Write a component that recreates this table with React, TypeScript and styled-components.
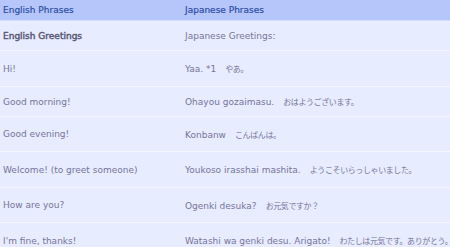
import styled, { createGlobalStyle } from 'styled-components';

const GlobalStyle = createGlobalStyle`
  html, body {
    margin: 0;
    padding: 0;
    background: #e8ecff;
  }
`;

const Table = styled.div`
  width: 450px;
  overflow: hidden;
  font-family: 'DejaVu Sans', 'Noto Sans CJK JP', sans-serif;
  font-size: 9px;
  color: #76749a;
  background: #e8ecff;
`;

const HeadRow = styled.div`
  display: grid;
  grid-template-columns: 182px 1fr;
  align-items: center;
  height: 20px;
  background: #b6c6fa;
  color: #2c4ea6;
  border-bottom: 1px solid #d4ddff;
  -webkit-text-stroke: 0.2px #2c4ea6;
`;

const Row = styled.div<{ $h: number }>`
  display: grid;
  grid-template-columns: 182px 1fr;
  align-items: center;
  height: ${({ $h }) => $h}px;
  box-sizing: border-box;
  border-bottom: 1px solid #f4f6ff;
  color: #76749a;
`;

const Cell = styled.div<{ $strong?: boolean }>`
  padding-left: 3px;
  white-space: nowrap;
  ${({ $strong }) =>
    $strong &&
    `
    color: #5b5878;
    -webkit-text-stroke: 0.45px #5b5878;
  `}
`;

const Jp = styled.span`
  font-family: 'Noto Sans CJK JP', sans-serif;
  font-size: 8px;
  letter-spacing: -0.4px;
`;

type Phrase = {
  en: string;
  romaji: string;
  kana?: string;
  h: number;
  strong?: boolean;
};

const phrases: Phrase[] = [
  { en: 'English Greetings', romaji: 'Japanese Greetings:', h: 30, strong: true },
  { en: 'Hi!', romaji: 'Yaa. *1', kana: 'やあ。', h: 36 },
  { en: 'Good morning!', romaji: 'Ohayou gozaimasu.', kana: 'おはようございます。', h: 30 },
  { en: 'Good evening!', romaji: 'Konbanw', kana: 'こんばんは。', h: 35 },
  { en: 'Welcome! (to greet someone)', romaji: 'Youkoso irasshai mashita.', kana: 'ようこそいらっしゃいました。', h: 36 },
  { en: 'How are you?', romaji: 'Ogenki desuka?', kana: 'お元気ですか？', h: 35 },
  { en: "I'm fine, thanks!", romaji: 'Watashi wa genki desu. Arigato!', kana: 'わたしは元気です。ありがとう。', h: 36 },
];

export default function App() {
  return (
    <>
      <GlobalStyle />
      <Table>
        <HeadRow>
          <Cell>English Phrases</Cell>
          <Cell>Japanese Phrases</Cell>
        </HeadRow>
        {phrases.map((p) => (
          <Row key={p.en} $h={p.h}>
            <Cell $strong={p.strong}>{p.en}</Cell>
            <Cell>
              {p.romaji}
              {p.kana && (
                <>
                  {'\u3000'}
                  <Jp>{p.kana}</Jp>
                </>
              )}
            </Cell>
          </Row>
        ))}
      </Table>
    </>
  );
}
